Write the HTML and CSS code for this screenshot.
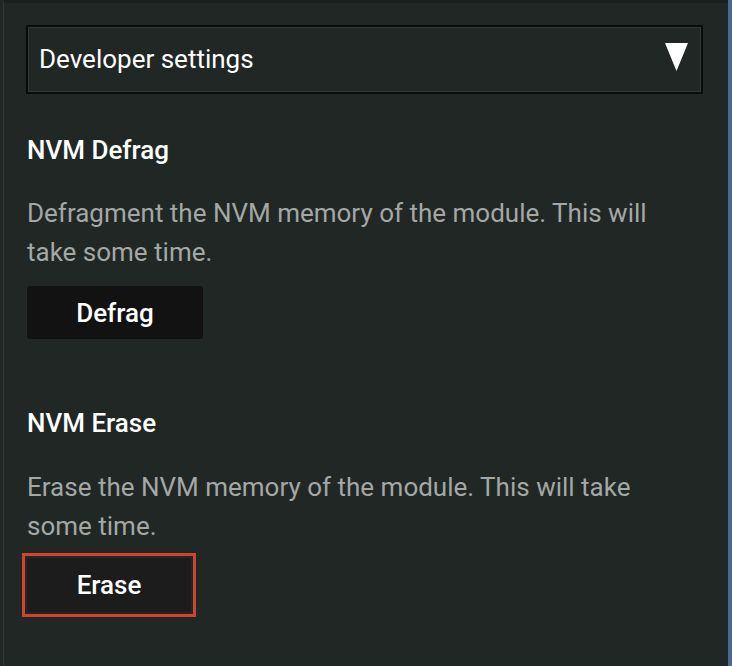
FILE: index.html
```html
<!DOCTYPE html>
<html>
<head>
<meta charset="utf-8">
<link rel="stylesheet" href="styles.css">
</head>
<body>
<div class="frame">
  <div class="panel">
    <div class="select">
      <span class="select-label">Developer settings</span>
      <svg class="select-arrow" width="23" height="28" viewBox="0 0 23 28" aria-hidden="true">
        <polygon points="0,0 23,0 11.5,28" fill="#ffffff"/>
      </svg>
    </div>

    <section class="section">
      <h3 class="section-title">NVM Defrag</h3>
      <p class="section-desc">Defragment the NVM memory of the module. This will take some time.</p>
      <button class="btn">Defrag</button>
    </section>

    <section class="section section-erase">
      <h3 class="section-title">NVM Erase</h3>
      <p class="section-desc">Erase the NVM memory of the module. This will take some time.</p>
      <div class="focus-ring">
        <button class="btn btn-focused">Erase</button>
      </div>
    </section>
  </div>
  <div class="edge"></div>
</div>
</body>
</html>
```

FILE: styles.css
```css
html, body {
  margin: 0;
  padding: 0;
  height: 100%;
  background: #212725;
}
body {
  font-family: Roboto, "Noto Sans", "Liberation Sans", sans-serif;
  color: #ffffff;
}
.frame {
  display: flex;
  height: 666px;
  width: 732px;
  overflow: hidden;
}
.panel {
  flex: 1;
  border-left: 1px solid #353a39;
  margin-left: 3px;
  border-top: 3px solid #1b201f;
  padding: 22px 25px 0 22px;
}
.edge {
  width: 4px;
  background: #4a6890;
}
.select {
  height: 65px;
  border: 2px solid #0a0c0b;
  box-shadow: inset 0 0 0 1px #323836;
  display: flex;
  align-items: center;
  justify-content: space-between;
  padding: 0 13px 0 11px;
}
.select-label {
  font-size: 26px;
  font-weight: 400;
  position: relative;
  top: -1px;
}
.select-arrow {
  display: block;
  position: relative;
  top: -3px;
}
.section {
  margin-top: 40px;
}
.section-erase {
  margin-top: 68px;
}
.section-title {
  margin: 0;
  font-size: 26px;
  font-weight: 500;
  line-height: 32px;
  padding-left: 1px;
}
.section-desc {
  margin: 28px 0 14px;
  max-width: 660px;
  font-size: 26px;
  line-height: 39px;
  color: #a3a8a6;
  padding-left: 1px;
}
.btn {
  font-family: inherit;
  font-size: 26px;
  font-weight: 500;
  color: #ffffff;
  background: #121212;
  border: none;
  border-radius: 3px;
  width: 176px;
  height: 53px;
  margin-left: 1px;
  padding: 0;
}
.section-erase .section-desc {
  margin-top: 29px;
  margin-bottom: 12px;
}
.focus-ring {
  display: inline-block;
  border: 3px solid #d3432b;
  padding: 2px;
  margin-left: -4px;
  margin-top: -5px;
}
.btn-focused {
  background: #1c1c1c;
  width: 164px;
  height: 54px;
  margin-left: 0;
  display: block;
}
```
